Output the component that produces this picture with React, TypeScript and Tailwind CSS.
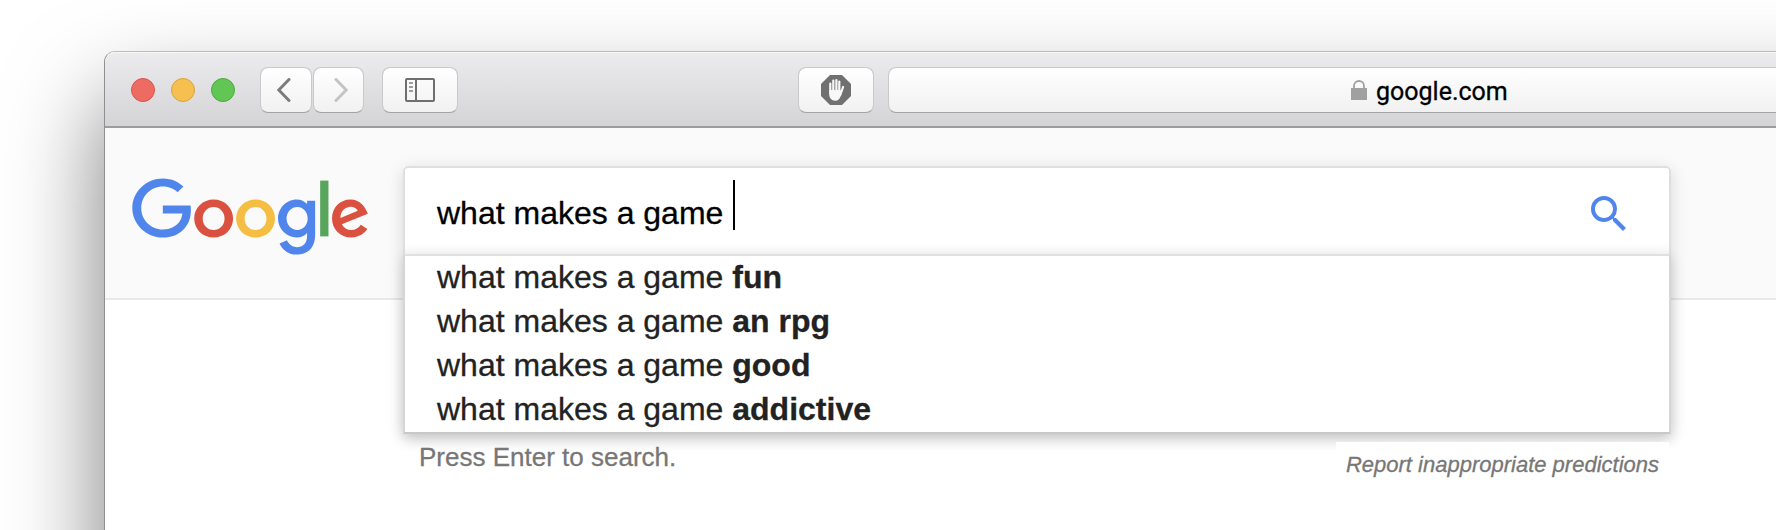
import React from "react";

const suggestions = ["fun", "an rpg", "good", "addictive"];

const toolButton =
  "flex h-[46px] shrink-0 items-center justify-center rounded-[8px] border border-[#c9c9cb] border-b-[#a3a3a4] bg-gradient-to-b from-white to-[#f1f1f1] bg-clip-padding";

function GoogleLogo() {
  return (
    <svg width="237.5" height="79" viewBox="0 0 272 92" preserveAspectRatio="none" aria-label="Google">
      <path fill="#db5140" d="M115.75 47.18c0 12.77-9.99 22.18-22.25 22.18s-22.25-9.41-22.25-22.18C71.25 34.32 81.24 25 93.5 25s22.25 9.32 22.25 22.18zm-9.74 0c0-7.98-5.79-13.44-12.51-13.44S80.99 39.2 80.99 47.18c0 7.9 5.79 13.44 12.51 13.44s12.51-5.55 12.51-13.44z" />
      <path fill="#f5bd41" d="M163.75 47.18c0 12.77-9.99 22.18-22.25 22.18s-22.25-9.41-22.25-22.18c0-12.85 9.99-22.18 22.25-22.18s22.25 9.32 22.25 22.18zm-9.74 0c0-7.98-5.79-13.44-12.51-13.44s-12.51 5.46-12.51 13.44c0 7.9 5.79 13.44 12.51 13.44s12.51-5.55 12.51-13.44z" />
      <path fill="#5086ec" d="M209.75 26.34v39.82c0 16.38-9.66 23.07-21.08 23.07-10.75 0-17.22-7.19-19.66-13.07l8.48-3.53c1.51 3.61 5.21 7.87 11.17 7.87 7.31 0 11.84-4.51 11.84-13v-3.19h-.34c-2.18 2.69-6.38 5.04-11.68 5.04-11.09 0-21.25-9.66-21.25-22.09 0-12.52 10.16-22.26 21.25-22.26 5.29 0 9.49 2.35 11.68 4.96h.34v-3.61h9.25zm-8.56 20.92c0-7.81-5.21-13.52-11.84-13.52-6.72 0-12.35 5.71-12.35 13.52 0 7.73 5.63 13.36 12.35 13.36 6.63 0 11.84-5.63 11.84-13.36z" />
      <path fill="#58a55c" d="M225 3v65h-9.5V3h9.5z" />
      <path fill="#db5140" d="M262.02 54.48l7.56 5.04c-2.44 3.61-8.32 9.83-18.48 9.83-12.6 0-22.01-9.74-22.01-22.18 0-13.19 9.49-22.18 20.92-22.18 11.51 0 17.14 9.16 18.98 14.11l1.01 2.52-29.65 12.28c2.27 4.45 5.8 6.72 10.75 6.72 4.96 0 8.4-2.44 10.92-6.14zm-23.27-7.98l19.82-8.23c-1.09-2.77-4.37-4.7-8.23-4.7-4.95 0-11.84 4.37-11.59 12.93z" />
      <path fill="#5086ec" d="M35.29 41.41V32H67c.31 1.64.47 3.58.47 5.68 0 7.06-1.93 15.79-8.15 22.01-6.05 6.3-13.78 9.66-24.02 9.66C16.32 69.35.36 53.89.36 34.91.36 15.93 16.32.47 35.3.47c10.5 0 17.98 4.12 23.6 9.49l-6.64 6.64c-4.03-3.78-9.49-6.72-16.97-6.72-13.86 0-24.7 11.17-24.7 25.03 0 13.86 10.84 25.03 24.7 25.03 8.99 0 14.11-3.61 17.39-6.89 2.66-2.66 4.41-6.46 5.1-11.65l-22.49.01z" />
    </svg>
  );
}

function Toolbar() {
  return (
    <div className="flex h-[76px] items-start rounded-tl-[10px] border-b-2 border-[#9c9c9d] bg-gradient-to-b from-[#ececee] to-[#d4d4d6] pl-[26px] pt-[15px] shadow-[inset_0_1px_0_#f7f7f7]">
      <div className="flex h-[46px] shrink-0 items-center gap-4">
        <span className="size-6 rounded-full border border-[#d9544b] bg-[#ed6b60]" />
        <span className="size-6 rounded-full border border-[#d9a23c] bg-[#f5c04f]" />
        <span className="size-6 rounded-full border border-[#51a73e] bg-[#62c655]" />
      </div>
      <div className="ml-[25px] flex shrink-0 gap-px">
        <div className={`${toolButton} w-[52px] pr-1`}>
          <svg width="14" height="24" viewBox="0 0 14 24" fill="none" stroke="#7c7c7c" strokeWidth="3" strokeLinecap="round">
            <path d="M12 1.500 1.800 12 12 22.500" />
          </svg>
        </div>
        <div className={`${toolButton} w-[51px] pl-1`}>
          <svg width="14" height="24" viewBox="0 0 14 24" fill="none" stroke="#c4c4c4" strokeWidth="3" strokeLinecap="round">
            <path d="M2 1.500 12.200 12 2 22.500" />
          </svg>
        </div>
      </div>
      <div className={`${toolButton} ml-[18px] w-[76px]`}>
        <svg width="30" height="24" viewBox="0 0 30 24" fill="none" stroke="#6f6f6f" strokeWidth="2">
          <rect x="1" y="1" width="28" height="22" rx="1" />
          <path d="M11 1v22" />
          <path d="M4 5h4M4 9h4M4 13h4" stroke="#9c9c9c" />
        </svg>
      </div>
      <div className={`${toolButton} ml-[340px] w-[76px]`}>
        <svg width="30" height="30" viewBox="0 0 30 30">
          <path fill="#707070" d="M9 0h12l9 9v12l-9 9H9l-9-9V9z" />
          <g stroke="#f8f8f8" strokeWidth="2.200" strokeLinecap="round" fill="none">
            <path d="M9.300 8.500v10M12.300 5.500v12M15.400 5v12M18.300 6.500V18M22.100 12l-2.800 8" />
          </g>
          <path fill="#f8f8f8" d="M8.200 15h11.200l1.600 1.500-1.300 4.500c-.9 3-2.700 4.700-5.400 4.700-4 0-6.100-2.600-6.100-6.900z" />
        </svg>
      </div>
      <div className="ml-[14px] flex h-[46px] flex-1 items-center rounded-l-[8px] border border-r-0 border-[#c9c9cb] border-b-[#a3a3a4] bg-gradient-to-b from-white to-[#f1f1f1] bg-clip-padding pl-[462px]">
        <svg width="16" height="20" viewBox="0 0 16 20">
          <rect y="8" width="16" height="12" fill="#a0a0a0" />
          <path d="M3 9V6a5 5 0 0 1 10 0v3" fill="none" stroke="#a0a0a0" strokeWidth="1.800" />
        </svg>
        <span className="ml-[9px] pt-[3px] font-[Roboto,sans-serif] text-[25px] leading-8 text-black [-webkit-text-stroke:0.3px]">google.com</span>
      </div>
    </div>
  );
}

function SearchBox() {
  return (
    <div className="relative z-10 ml-[36px] mt-[38px] w-[1268px] shrink-0">
      <div className="shadow-[0_4px_16px_rgba(0,0,0,0.14)]">
        <div className="flex h-[88px] items-start justify-between rounded-t-[5px] border-2 border-b-0 border-[#dfdfdf] bg-gradient-to-b from-white from-85% to-[#f9f9f9] pl-8 pr-[36px] pt-3">
          <div className="flex">
            <span className="mt-[11px] whitespace-pre text-[32px] leading-[44px] text-black [-webkit-text-stroke:0.3px]">what makes a game </span>
            <span className="ml-px h-[50px] w-0.5 bg-black" />
          </div>
          <svg className="mt-2.5" width="48" height="48" viewBox="0 0 24 24" fill="#5086ec">
            <path d="M15.500 14h-.79l-.28-.27A6.471 6.471 0 0 0 16 9.500 6.500 6.500 0 1 0 9.500 16c1.610 0 3.090-.59 4.230-1.570l.27.28v.79l5 4.990L20.490 19l-4.990-5zm-6 0C7.010 14 5 11.990 5 9.500S7.010 5 9.500 5 14 7.010 14 9.500 11.990 14 9.500 14z" />
          </svg>
        </div>
        <ul className="h-[180px] border-2 border-[#d6d6d6] border-b-[#c8c8c8] border-t-[#e0e0e0] bg-white shadow-[0_4px_12px_rgba(0,0,0,0.14)]">
          {suggestions.map((word) => (
            <li key={word} className="h-11 whitespace-pre pl-8 text-[32px] leading-[43px] text-[#222] [-webkit-text-stroke:0.3px]">
              what makes a game <b>{word}</b>
            </li>
          ))}
        </ul>
      </div>
      <div className="flex items-start justify-between pl-4 pr-0.5 text-[#777] [-webkit-text-stroke:0.3px]">
        <span className="mt-[7px] text-[26px] leading-8">Press Enter to search.</span>
        <span className="mt-2 bg-white px-2.5 pt-2 text-[22px] italic leading-[30px]">Report inappropriate predictions</span>
      </div>
    </div>
  );
}

export default function App() {
  return (
    <div className="h-[530px] w-full overflow-hidden bg-white pl-[104px] pt-[51px] font-['Liberation_Sans',Arial,sans-serif]">
      <div className="h-[900px] w-[2400px] rounded-tl-[11px] border-l border-t border-l-[#8f8f8f] border-t-[#bcbcbc] bg-white shadow-[0_50px_95px_rgba(0,0,0,0.52)]">
        <div className="w-[1671px]">
          <Toolbar />
        </div>
        <div className="flex h-[172px] items-start border-b-2 border-[#e9e9e9] bg-[#fafafa] pl-[27px]">
          <div className="mt-[50px] w-[235px] shrink-0">
            <GoogleLogo />
          </div>
          <SearchBox />
        </div>
      </div>
    </div>
  );
}
